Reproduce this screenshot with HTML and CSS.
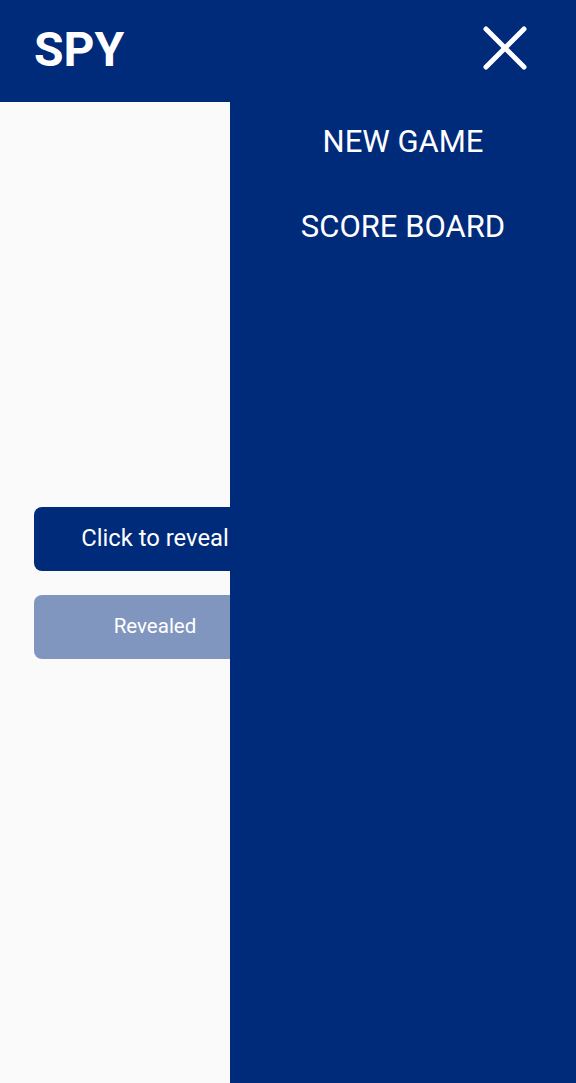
FILE: index.html
```html
<!DOCTYPE html>
<html>
<head>
<meta charset="utf-8">
<link rel="stylesheet" href="styles.css">
</head>
<body>
<header class="topbar">
  <div class="title">SPY</div>
  <button class="close" aria-label="Close">
    <svg width="46" height="46" viewBox="0 0 46 46"><path d="M4 5 L42 43 M42 5 L4 43" stroke="#fff" stroke-width="5" stroke-linecap="round"/></svg>
  </button>
</header>
<main class="content">
  <button class="btn btn-primary">Click to reveal</button>
  <button class="btn btn-done">Revealed</button>
</main>
<nav class="drawer">
  <a class="item">NEW GAME</a>
  <a class="item">SCORE BOARD</a>
</nav>
</body>
</html>
```
FILE: styles.css
```css
* { box-sizing: border-box; }
html, body { margin: 0; padding: 0; height: 100%; }
body {
  background: #fafafa;
  font-family: Roboto, "Noto Sans", sans-serif;
  overflow: hidden;
}
.topbar {
  height: 102px;
  background: #002a7a;
  display: flex;
  align-items: center;
  justify-content: space-between;
  padding: 0 48px 0 34px;
}
.title {
  color: #fff;
  font-weight: 700;
  font-size: 48px;
  letter-spacing: 0;
  margin-top: -4px;
}
.close {
  background: none;
  border: 0;
  padding: 0;
  width: 46px;
  height: 46px;
  margin-top: -8px;
  display: flex;
}
.content {
  display: flex;
  flex-direction: column;
  gap: 24px;
  padding: 405px 0 0 34px;
}
.btn {
  width: 242px;
  height: 64px;
  border: 0;
  border-radius: 8px;
  color: #fff;
  font-family: Roboto, sans-serif;
  padding: 0;
}
.btn-primary { background: #002a7a; font-size: 23.8px; padding-bottom: 2px; }
.btn-done { background: #8196bf; font-size: 20.5px; padding-bottom: 2px; }
.drawer {
  position: absolute;
  top: 102px;
  left: 230px;
  right: 0;
  bottom: 0;
  background: #002a7a;
  display: flex;
  flex-direction: column;
  align-items: center;
  padding-top: 18px;
  gap: 42px;
}
.item {
  color: #fff;
  font-size: 31px;
  line-height: 43px;
}
```
